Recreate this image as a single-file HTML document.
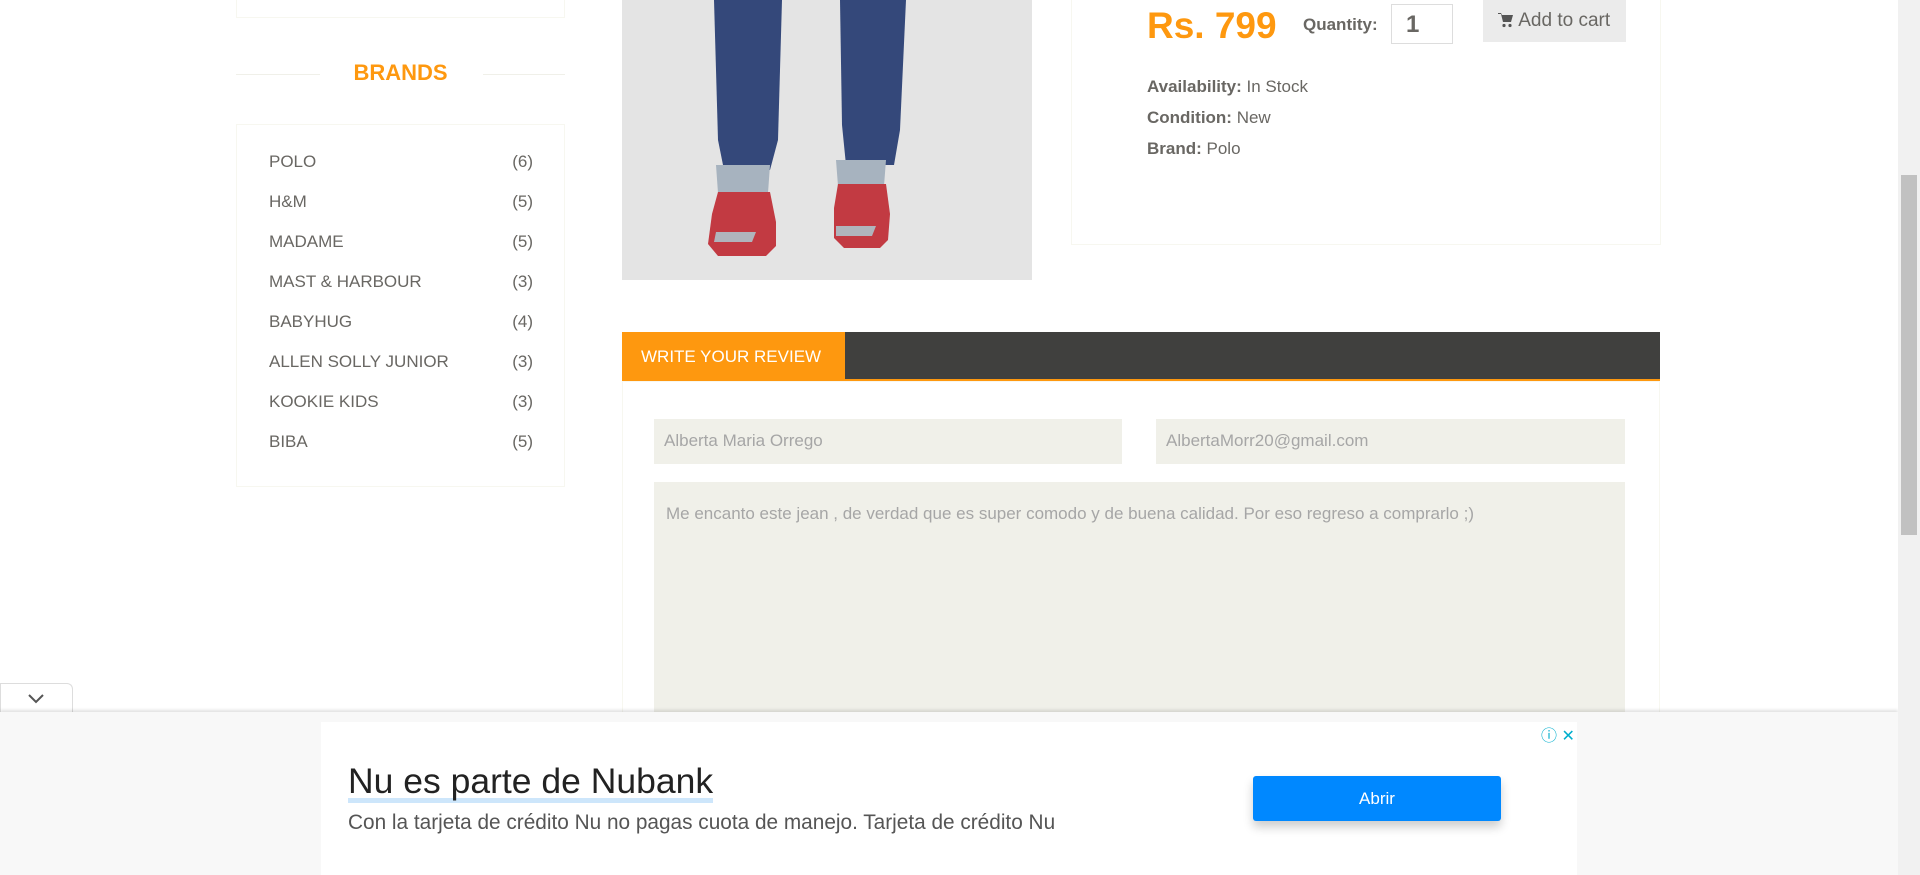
<!DOCTYPE html>
<html><head><meta charset="utf-8"><style>
*{box-sizing:border-box;margin:0;padding:0}
body{width:1920px;height:875px;overflow:hidden;background:#fff;font-family:"Liberation Sans",Arial,sans-serif;position:relative;color:#696763}
.a{position:absolute}
.box{border:1px solid #f7f7f0}
.brand{position:absolute;left:269px;font-size:17px;color:#696763}
.cnt{position:absolute;right:1387px;font-size:17px;color:#696763}
.lab{position:absolute;left:1147px;font-size:17px;color:#696763}
.lab b{color:#696763}
</style></head><body>
<!-- sidebar -->
<div class="a box" style="left:236px;top:-2px;width:329px;height:20px"></div>
<div class="a" style="left:236px;top:74px;width:84px;height:1px;background:#f0f0e9"></div>
<div class="a" style="left:483px;top:74px;width:82px;height:1px;background:#f0f0e9"></div>
<div class="a" style="left:236px;top:60px;width:329px;text-align:center;font-size:22px;font-weight:bold;color:#FE980F">BRANDS</div>
<div class="a box" style="left:236px;top:124px;width:329px;height:363px"></div>
<div class="brand" style="top:152px">POLO</div><div class="cnt" style="top:152px">(6)</div>
<div class="brand" style="top:192px">H&amp;M</div><div class="cnt" style="top:192px">(5)</div>
<div class="brand" style="top:232px">MADAME</div><div class="cnt" style="top:232px">(5)</div>
<div class="brand" style="top:272px">MAST &amp; HARBOUR</div><div class="cnt" style="top:272px">(3)</div>
<div class="brand" style="top:312px">BABYHUG</div><div class="cnt" style="top:312px">(4)</div>
<div class="brand" style="top:352px">ALLEN SOLLY JUNIOR</div><div class="cnt" style="top:352px">(3)</div>
<div class="brand" style="top:392px">KOOKIE KIDS</div><div class="cnt" style="top:392px">(3)</div>
<div class="brand" style="top:432px">BIBA</div><div class="cnt" style="top:432px">(5)</div>
<!-- product image -->
<div class="a" style="left:622px;top:0;width:410px;height:280px;background:#e4e4e4;overflow:hidden">
<svg width="410" height="280" viewBox="0 0 410 280">
<path d="M92 0h68l-4 140 -8 30h-46l-6-30z" fill="#34487a"/>
<path d="M218 0h66l-6 130-6 35h-48l-4-40z" fill="#34487a"/>
<path d="M94 165h54l-2 28h-50z" fill="#a7b3bf"/>
<path d="M214 160h50l-2 26h-46z" fill="#a7b3bf"/>
<path d="M96 192h52l6 30 0 24-10 10h-48l-10-12 4-30z" fill="#c23a42"/>
<path d="M216 184h48l4 30-2 26-8 8h-36l-10-10 0-30z" fill="#c23a42"/>
<path d="M94 232h40l-4 10h-38zM214 226h40l-4 10h-36z" fill="#b0b4bc"/>
</svg>
</div>
<!-- product info -->
<div class="a box" style="left:1071px;top:-2px;width:590px;height:247px"></div>
<div class="a" style="left:1147px;top:5px;font-size:37px;font-weight:bold;color:#FE980F">Rs. 799</div>
<div class="a" style="left:1303px;top:15px;font-size:17px;font-weight:bold;color:#696763">Quantity:</div>
<div class="a" style="left:1391px;top:4px;width:62px;height:40px;border:1px solid #ddd;font-size:24px;font-weight:bold;color:#696763;padding:6px 0 0 14px">1</div>
<div class="a" style="left:1483px;top:-2px;width:143px;height:44px;background:#ebebeb;font-size:19px;color:#696763;padding:12px 0 0 15px">
<svg width="16" height="16" viewBox="0 0 16 16" style="vertical-align:-2px"><path d="M0 1h3l1 2h11l-2 7H5L3 2H0z" fill="#555"/><circle cx="6" cy="13.5" r="1.6" fill="#555"/><circle cx="12" cy="13.5" r="1.6" fill="#555"/></svg> Add to cart</div>
<div class="lab" style="top:77px"><b>Availability:</b> In Stock</div>
<div class="lab" style="top:108px"><b>Condition:</b> New</div>
<div class="lab" style="top:139px"><b>Brand:</b> Polo</div>
<!-- review -->
<div class="a" style="left:622px;top:332px;width:1038px;height:49px;background:#40403e;border-bottom:2px solid #FE980F"></div>
<div class="a" style="left:622px;top:332px;width:223px;height:49px;background:#FE980F;color:#fff;font-size:17px;padding:15px 0 0 19px">WRITE YOUR REVIEW</div>
<div class="a box" style="left:622px;top:381px;width:1038px;height:400px"></div>
<div class="a" style="left:654px;top:419px;width:468px;height:45px;background:#F0F0E9;color:#a6a6a6;font-size:17px;padding:12px 10px">Alberta Maria Orrego</div>
<div class="a" style="left:1156px;top:419px;width:469px;height:45px;background:#F0F0E9;color:#a6a6a6;font-size:17px;padding:12px 10px">AlbertaMorr20@gmail.com</div>
<div class="a" style="left:654px;top:482px;width:971px;height:300px;background:#F0F0E9;color:#a6a6a6;font-size:17px;padding:22px 12px">Me encanto este jean , de verdad que es super comodo y de buena calidad. Por eso regreso a comprarlo ;)</div>
<!-- ad -->
<div class="a" style="left:0;top:683px;width:73px;height:32px;background:#fff;border:1px solid #ddd;border-bottom:none;border-radius:0 6px 0 0"><svg class="a" style="left:26px;top:9px" width="18" height="12" viewBox="0 0 18 12"><path d="M2 2l7 7 7-7" fill="none" stroke="#555" stroke-width="2"/></svg></div>
<div class="a" style="left:0;top:712px;width:1898px;height:163px;background:#f8f8f8;box-shadow:0 -2px 3px rgba(0,0,0,.12)"></div>
<div class="a" style="left:321px;top:722px;width:1256px;height:153px;background:#fff"></div>
<div class="a" style="left:1541px;top:722px;font-size:16px;color:#00aecd">ⓘ ✕</div>
<div class="a" style="left:348px;top:762px;font-size:35.5px;color:#222;line-height:38px;background:linear-gradient(to top,#cde6fb 0,#cde6fb 5px,transparent 5px);padding-bottom:3px">Nu es parte de Nubank</div>
<div class="a" style="left:348px;top:811px;font-size:20.8px;color:#555">Con la tarjeta de crédito Nu no pagas cuota de manejo. Tarjeta de crédito Nu</div>
<div class="a" style="left:1253px;top:776px;width:248px;height:45px;background:#0088ff;border-radius:3px;color:#fff;font-size:17px;text-align:center;line-height:45px;box-shadow:0 6px 10px rgba(0,0,0,.2)">Abrir</div>
<!-- scrollbar -->
<div class="a" style="left:1898px;top:0;width:22px;height:875px;background:#f1f1f1"></div>
<div class="a" style="left:1901px;top:175px;width:16px;height:360px;background:#c1c1c1"></div>
</body></html>
